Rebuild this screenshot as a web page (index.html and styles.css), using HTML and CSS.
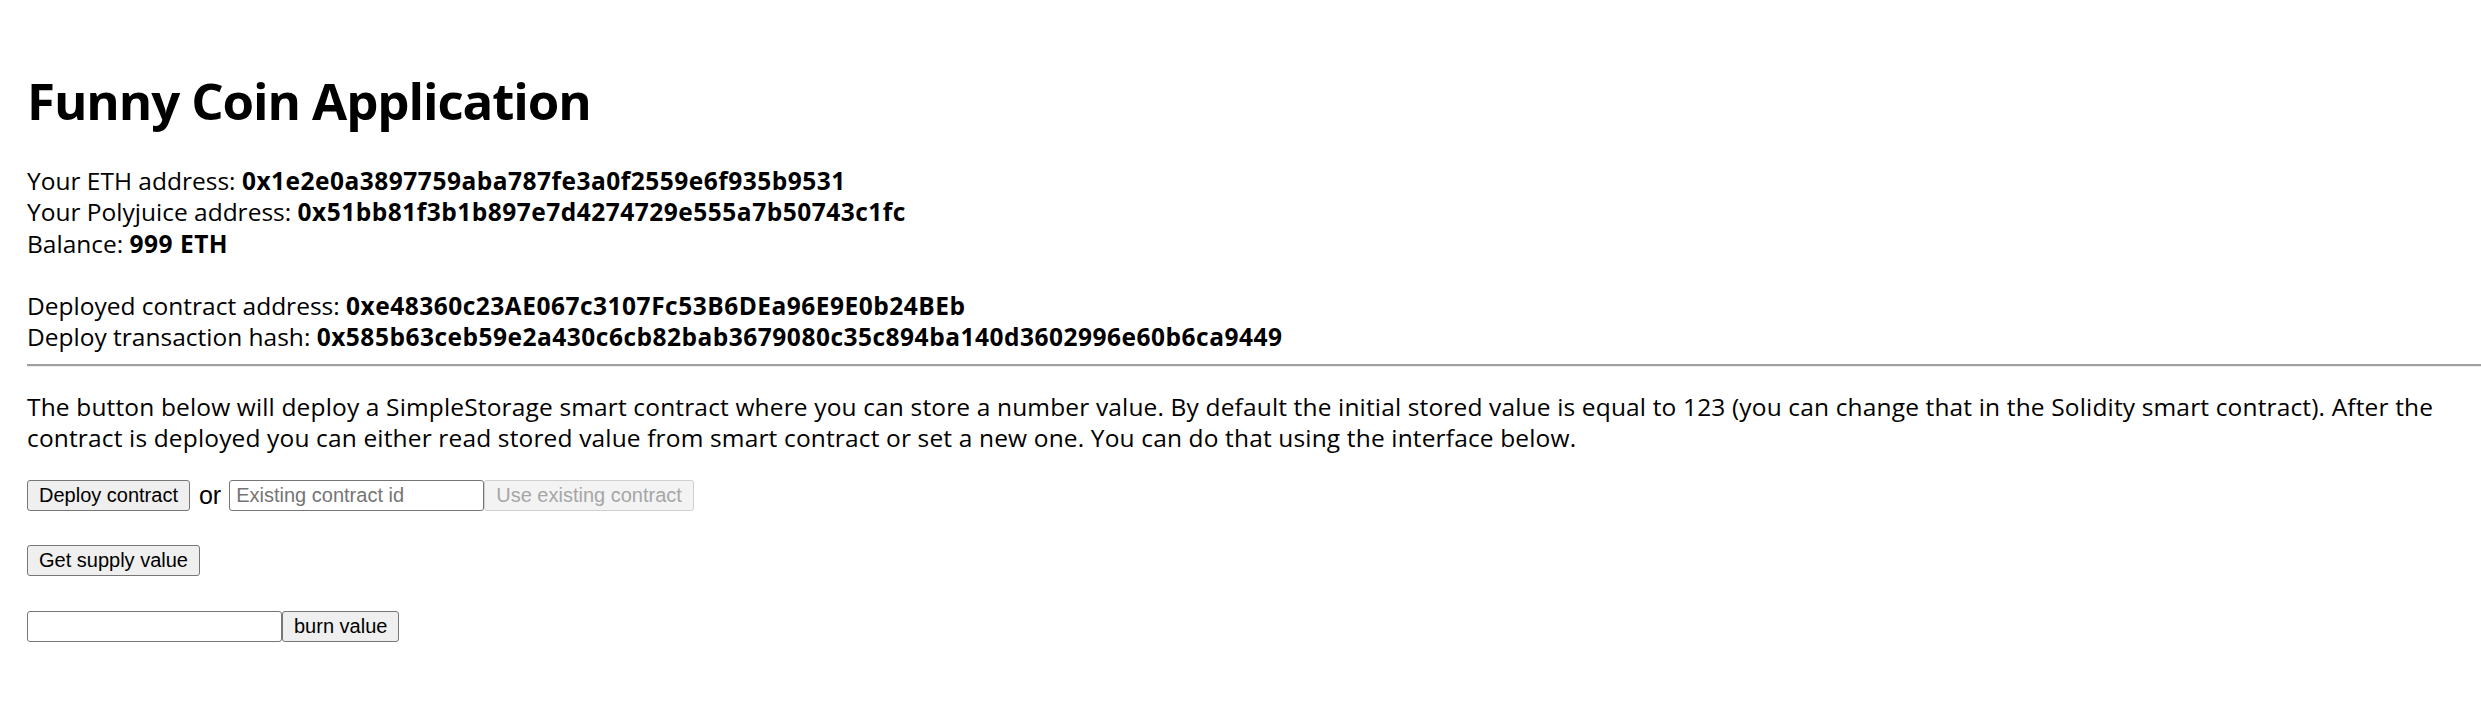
FILE: index.html
```html
<!DOCTYPE html>
<html lang="en">
<head>
<meta charset="utf-8">
<title>Funny Coin Application</title>
<link rel="stylesheet" href="styles.css">
</head>
<body>
<div class="app">
  <h1 class="title">Funny Coin Application</h1>
  <div class="info">
    Your ETH address: <b>0x1e2e0a3897759aba787fe3a0f2559e6f935b9531</b><br>
    Your Polyjuice address: <b>0x51bb81f3b1b897e7d4274729e555a7b50743c1fc</b><br>
    Balance: <b>999 ETH</b><br>
    <br>
    Deployed contract address: <b>0xe48360c23AE067c3107Fc53B6DEa96E9E0b24BEb</b><br>
    Deploy transaction hash: <b>0x585b63ceb59e2a430c6cb82bab3679080c35c894ba140d3602996e60b6ca9449</b>
  </div>
  <hr class="divider">
  <p class="desc">The button below will deploy a SimpleStorage smart contract where you can store a number value. By default the initial stored value is equal to 123 (you can change that in the Solidity smart contract). After the contract is deployed you can either read stored value from smart contract or set a new one. You can do that using the interface below.</p>
  <div class="row">
    <button class="btn">Deploy contract</button>
    <span class="or">or</span>
    <input class="field" type="text" placeholder="Existing contract id">
    <button class="btn" disabled>Use existing contract</button>
  </div>
  <div class="row">
    <button class="btn">Get supply value</button>
  </div>
  <div class="row row-last">
    <input class="field" type="text">
    <button class="btn">burn value</button>
  </div>
</div>
</body>
</html>
```
FILE: styles.css
```css
html, body {
  margin: 0;
  padding: 0;
  background: #ffffff;
}

.app {
  padding: 69px 0 0 27px;
  font-family: "Open Sans", "Noto Sans", sans-serif;
  font-size: 24.5px;
  color: #000000;
}

.title {
  margin: 0;
  font-size: 51px;
  line-height: 62px;
  font-weight: 700;
  letter-spacing: -1.1px;
}

.info {
  margin-top: 34px;
  line-height: 31.3px;
}

.info b {
  font-weight: 700;
  letter-spacing: 0.5px;
}

.divider {
  margin: 11px 0 0 0;
  height: 0;
  border: 0;
  border-top: 2px solid #a0a0a0;
  border-bottom: 1px solid #ececec;
}

.desc {
  margin: 24px 0 0 0;
  max-width: 2440px;
  font-size: 24.5px;
  letter-spacing: 0.15px;
  line-height: 31.5px;
}

.row {
  display: flex;
  align-items: center;
  margin-top: 26px;
  height: 31px;
}

.row + .row {
  margin-top: 34px;
}

.row + .row-last {
  margin-top: 35px;
}

.btn {
  box-sizing: border-box;
  height: 31px;
  margin: 0;
  padding: 0 11px;
  font-family: "Liberation Sans", Arial, sans-serif;
  font-size: 20px;
  color: #000000;
  background: #efefef;
  border: 1px solid #767676;
  border-radius: 3px;
}

.btn:disabled {
  color: #a6a6a6;
  background: #f3f3f3;
  border-color: #cfcfcf;
}

.or {
  margin: 0 8px 0 9px;
  font-family: "Liberation Sans", Arial, sans-serif;
  font-size: 25px;
  line-height: 31px;
}

.field {
  box-sizing: border-box;
  width: 255px;
  height: 31px;
  margin: 0;
  padding: 0 6px;
  font-family: "Liberation Sans", Arial, sans-serif;
  font-size: 20px;
  color: #000000;
  background: #ffffff;
  border: 1px solid #767676;
  border-radius: 3px;
}

.field::placeholder {
  color: #757575;
}
```
